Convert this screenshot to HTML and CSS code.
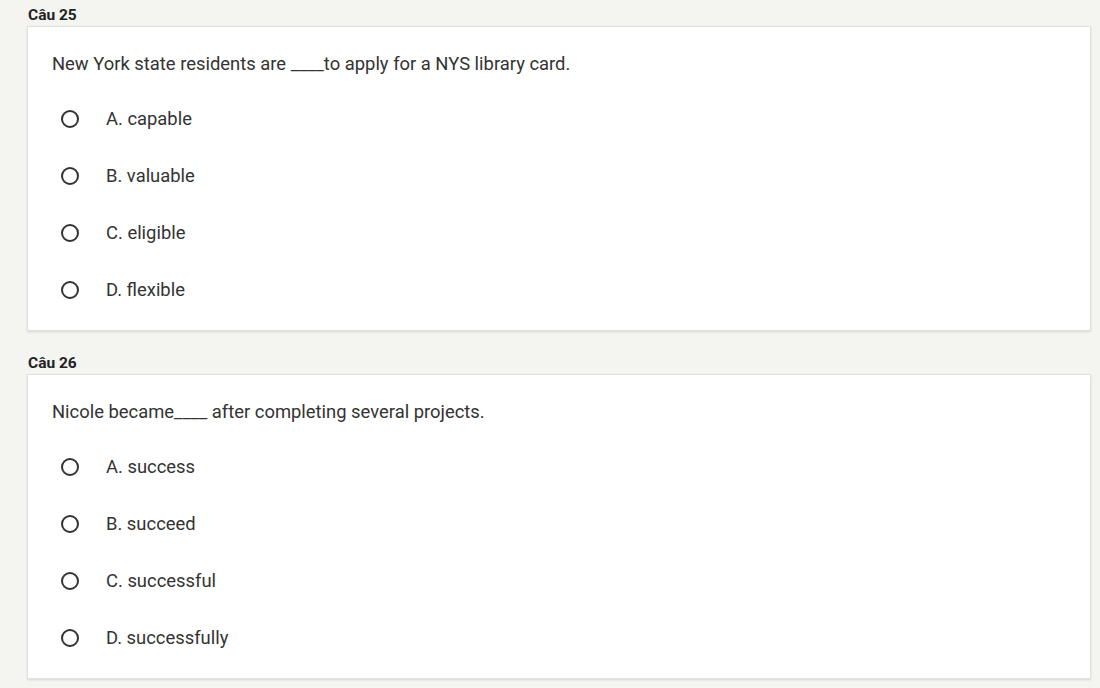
FILE: index.html
```html
<!DOCTYPE html>
<html>
<head>
<meta charset="utf-8">
<link rel="stylesheet" href="styles.css">
</head>
<body>
<div class="page">
  <section class="question">
    <div class="label">Câu 25</div>
    <div class="card">
      <p class="prompt">New York state residents are ____to apply for a NYS library card.</p>
      <ul class="options">
        <li class="option"><span class="radio"></span><span class="text">A. capable</span></li>
        <li class="option"><span class="radio"></span><span class="text">B. valuable</span></li>
        <li class="option"><span class="radio"></span><span class="text">C. eligible</span></li>
        <li class="option"><span class="radio"></span><span class="text">D. flexible</span></li>
      </ul>
    </div>
  </section>
  <section class="question">
    <div class="label">Câu 26</div>
    <div class="card">
      <p class="prompt">Nicole became____ after completing several projects.</p>
      <ul class="options">
        <li class="option"><span class="radio"></span><span class="text">A. success</span></li>
        <li class="option"><span class="radio"></span><span class="text">B. succeed</span></li>
        <li class="option"><span class="radio"></span><span class="text">C. successful</span></li>
        <li class="option"><span class="radio"></span><span class="text">D. successfully</span></li>
      </ul>
    </div>
  </section>
</div>
</body>
</html>
```
FILE: styles.css
```css
html, body {
  margin: 0;
  padding: 0;
  background: #f4f4f1;
  font-family: Roboto, "Liberation Sans", sans-serif;
  color: #333;
}
.page {
  padding: 4px 9px 0 27px;
}
.label {
  font-size: 15.5px;
  font-weight: 700;
  line-height: 22px;
  color: #222;
  padding-left: 1px;
}
.card {
  background: #fff;
  border: 1px solid #e0e0dc;
  box-shadow: 0 1px 2px rgba(0,0,0,0.12);
  padding: 25px 24px 12px 24px;
  margin-bottom: 21px;
}
.prompt {
  margin: 0;
  font-size: 18.4px;
  line-height: 24px;
  color: #333;
}
.options {
  list-style: none;
  margin: 14px 0 0 0;
  padding: 0;
}
.option {
  display: flex;
  align-items: center;
  height: 57px;
  padding-left: 9px;
}
.radio {
  width: 14px;
  height: 14px;
  border: 2px solid #333;
  border-radius: 50%;
  flex: none;
}
.text {
  margin-left: 27px;
  font-size: 18.4px;
  color: #333;
}
```
